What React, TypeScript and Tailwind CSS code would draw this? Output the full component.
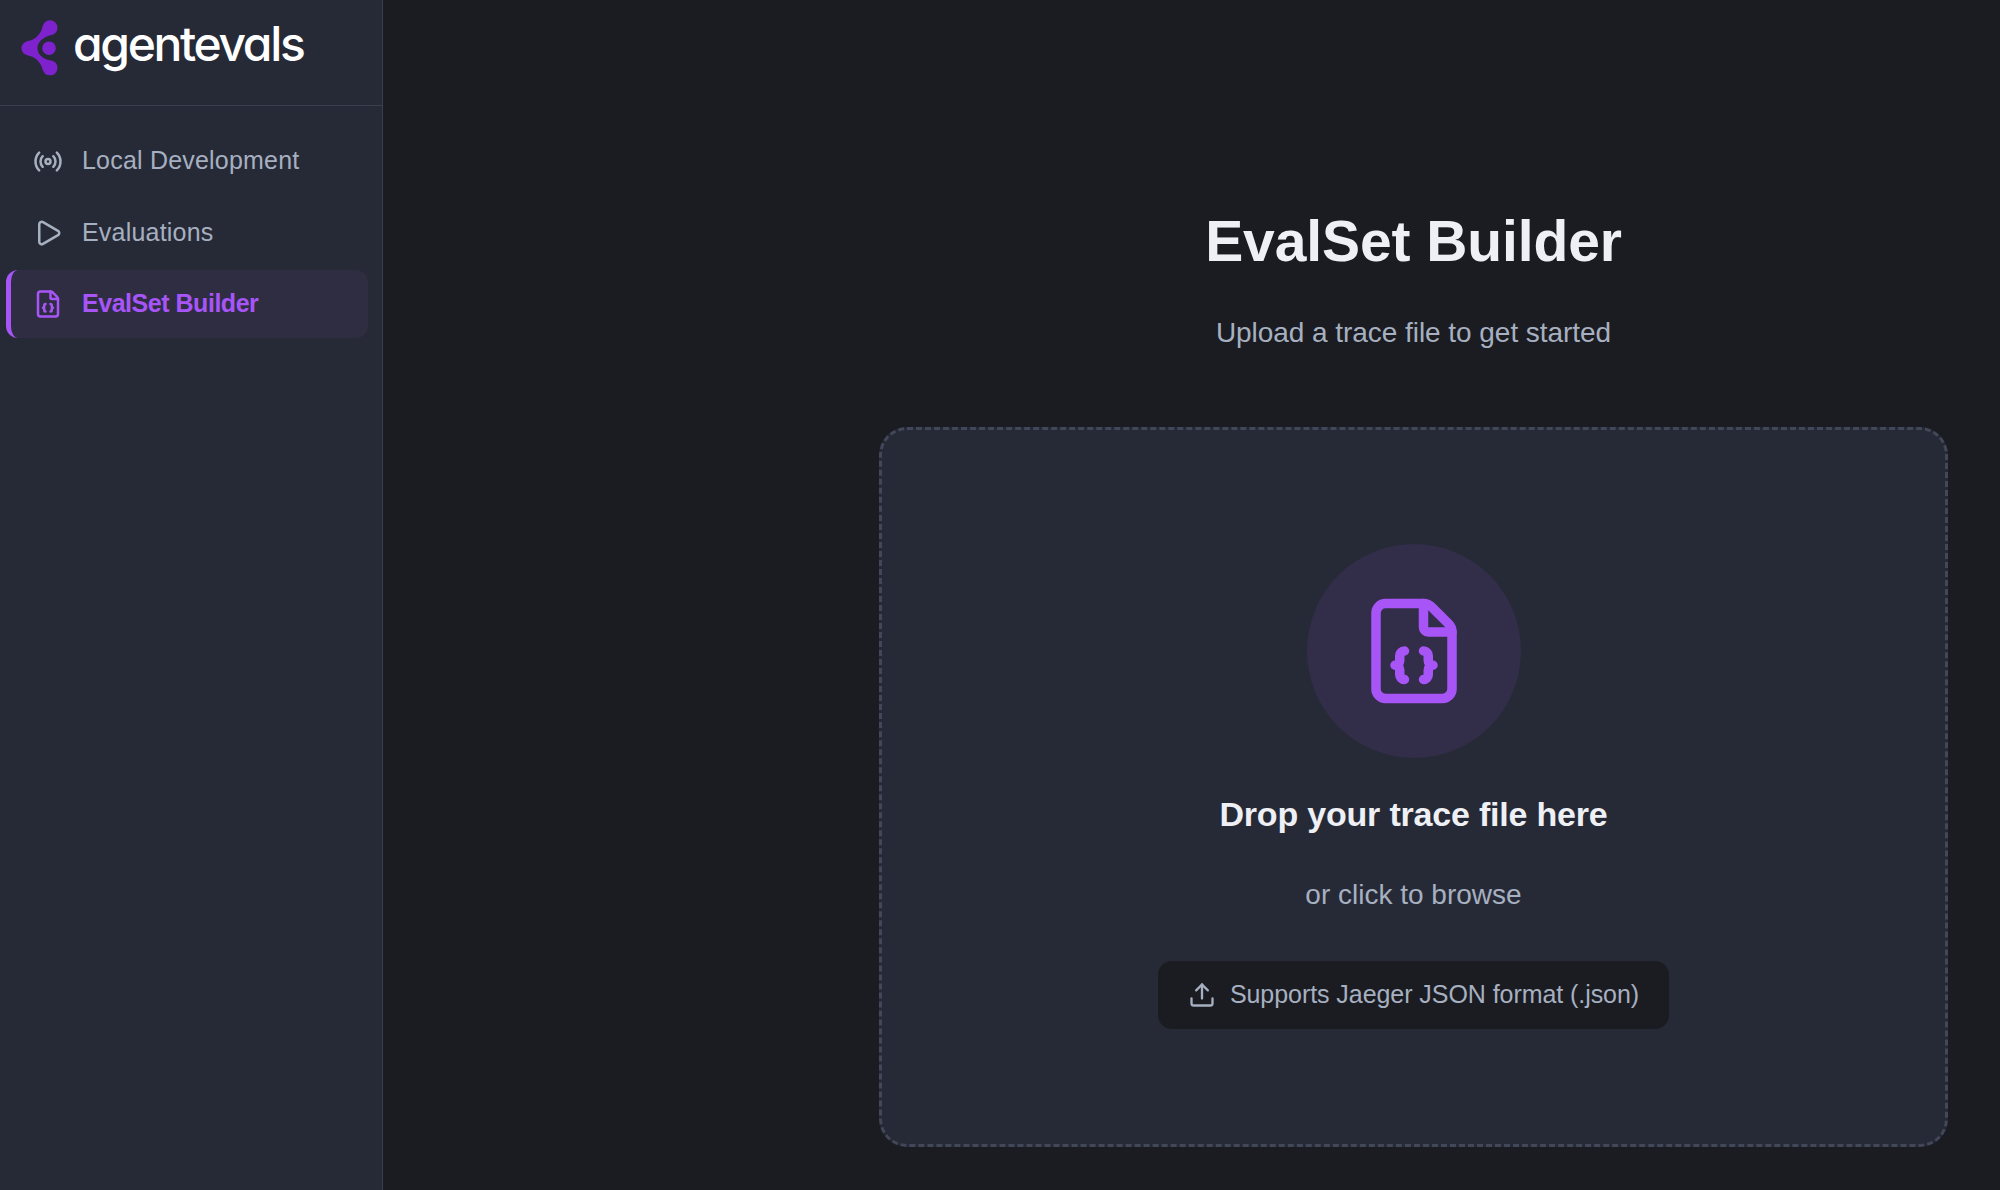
import React from 'react';
import { Radio, Play, FileBraces, Upload } from 'lucide-react';

const LogoMark = () => (
  <svg width="37" height="56" viewBox="62 62 108 165" fill="#7e22ce">
    <circle cx="147" cy="85" r="22" />
    <circle cx="147" cy="203" r="22" />
    <circle cx="144" cy="145" r="20" />
    <path d="M126 78 C122 100 105 120 85 123 C72 125 63 134 63 145 C63 156 72 165 85 167 C105 170 122 190 126 210 L155 183 C135 180 110 168 110 145 C110 122 135 110 155 105 Z" />
  </svg>
);

const NavItem: React.FC<{ icon: React.ReactNode; label: string; active?: boolean }> = ({ icon, label, active }) => (
  <div
    className={
      active
        ? 'flex items-center h-[68px] rounded-xl border-l-[5px] border-[#a855f7] bg-[#2e2d42] text-[#a855f7] font-bold pl-[22px]'
        : 'flex items-center h-[68px] rounded-xl border-l-[5px] border-transparent text-[#a6b0c0] pl-[22px]'
    }
  >
    <span className="w-[30px] flex justify-center mr-[19px]">{icon}</span>
    <span className={active ? 'text-[25px] tracking-[-0.47px]' : 'text-[25px] tracking-[0.2px]'}>{label}</span>
  </div>
);

export default function App() {
  return (
    <div className="flex h-[1190px] bg-[#1b1c21] overflow-hidden font-['Liberation_Sans',sans-serif]">
      <aside className="w-[383px] shrink-0 bg-[#262a36] border-r border-[#3a3e4e]">
        <div className="h-[106px] flex items-center pl-[21px] pb-[10px] border-b border-[#3a3e4e]">
          <LogoMark />
          <span className="ml-[15px] text-[48px] leading-none font-medium text-white tracking-[-2.35px] font-['Inter',sans-serif] [font-feature-settings:'cv11'] -mt-[8px]">
            agentevals
          </span>
        </div>
        <nav className="flex flex-col gap-[3.5px] pt-[21px] pl-[6px] pr-[14px]">
          <NavItem icon={<Radio size={33} strokeWidth={2} />} label="Local Development" />
          <NavItem icon={<Play size={30} strokeWidth={2} />} label="Evaluations" />
          <NavItem icon={<FileBraces size={30} strokeWidth={2} />} label="EvalSet Builder" active />
        </nav>
      </aside>

      <main className="flex-1 flex justify-end pr-[52px] pt-[208px]">
        <div className="w-[1069px] flex flex-col items-center">
          <h1 className="text-[57px] leading-[67px] font-bold text-[#eef0f5] tracking-[-0.1px]">EvalSet Builder</h1>
          <p className="mt-[39px] text-[28px] leading-[37px] text-[#a6b0c0] tracking-[-0.05px]">Upload a trace file to get started</p>

          <div className="mt-[76px] w-full h-[720px] rounded-[28px] border-[3px] border-dashed border-[#424759] bg-[#262a36] flex flex-col items-center pt-[114px]">
            <div className="w-[214px] h-[214px] rounded-full bg-[#322d49] flex items-center justify-center text-[#a855f7]">
              <FileBraces size={114} strokeWidth={2} />
            </div>
            <h2 className="mt-[34px] text-[34px] leading-[44px] font-bold text-[#eef0f5] tracking-[-0.2px]">Drop your trace file here</h2>
            <p className="mt-[41px] text-[28px] leading-[36px] text-[#a6b0c0]">or click to browse</p>
            <div className="mt-[48px] h-[68px] w-[511px] rounded-[14px] bg-[#1b1c21] flex items-center justify-center gap-[14px] text-[#a6b0c0]">
              <Upload size={28} strokeWidth={2} />
              <span className="text-[25px] tracking-[-0.06px]">Supports Jaeger JSON format (.json)</span>
            </div>
          </div>
        </div>
      </main>
    </div>
  );
}
